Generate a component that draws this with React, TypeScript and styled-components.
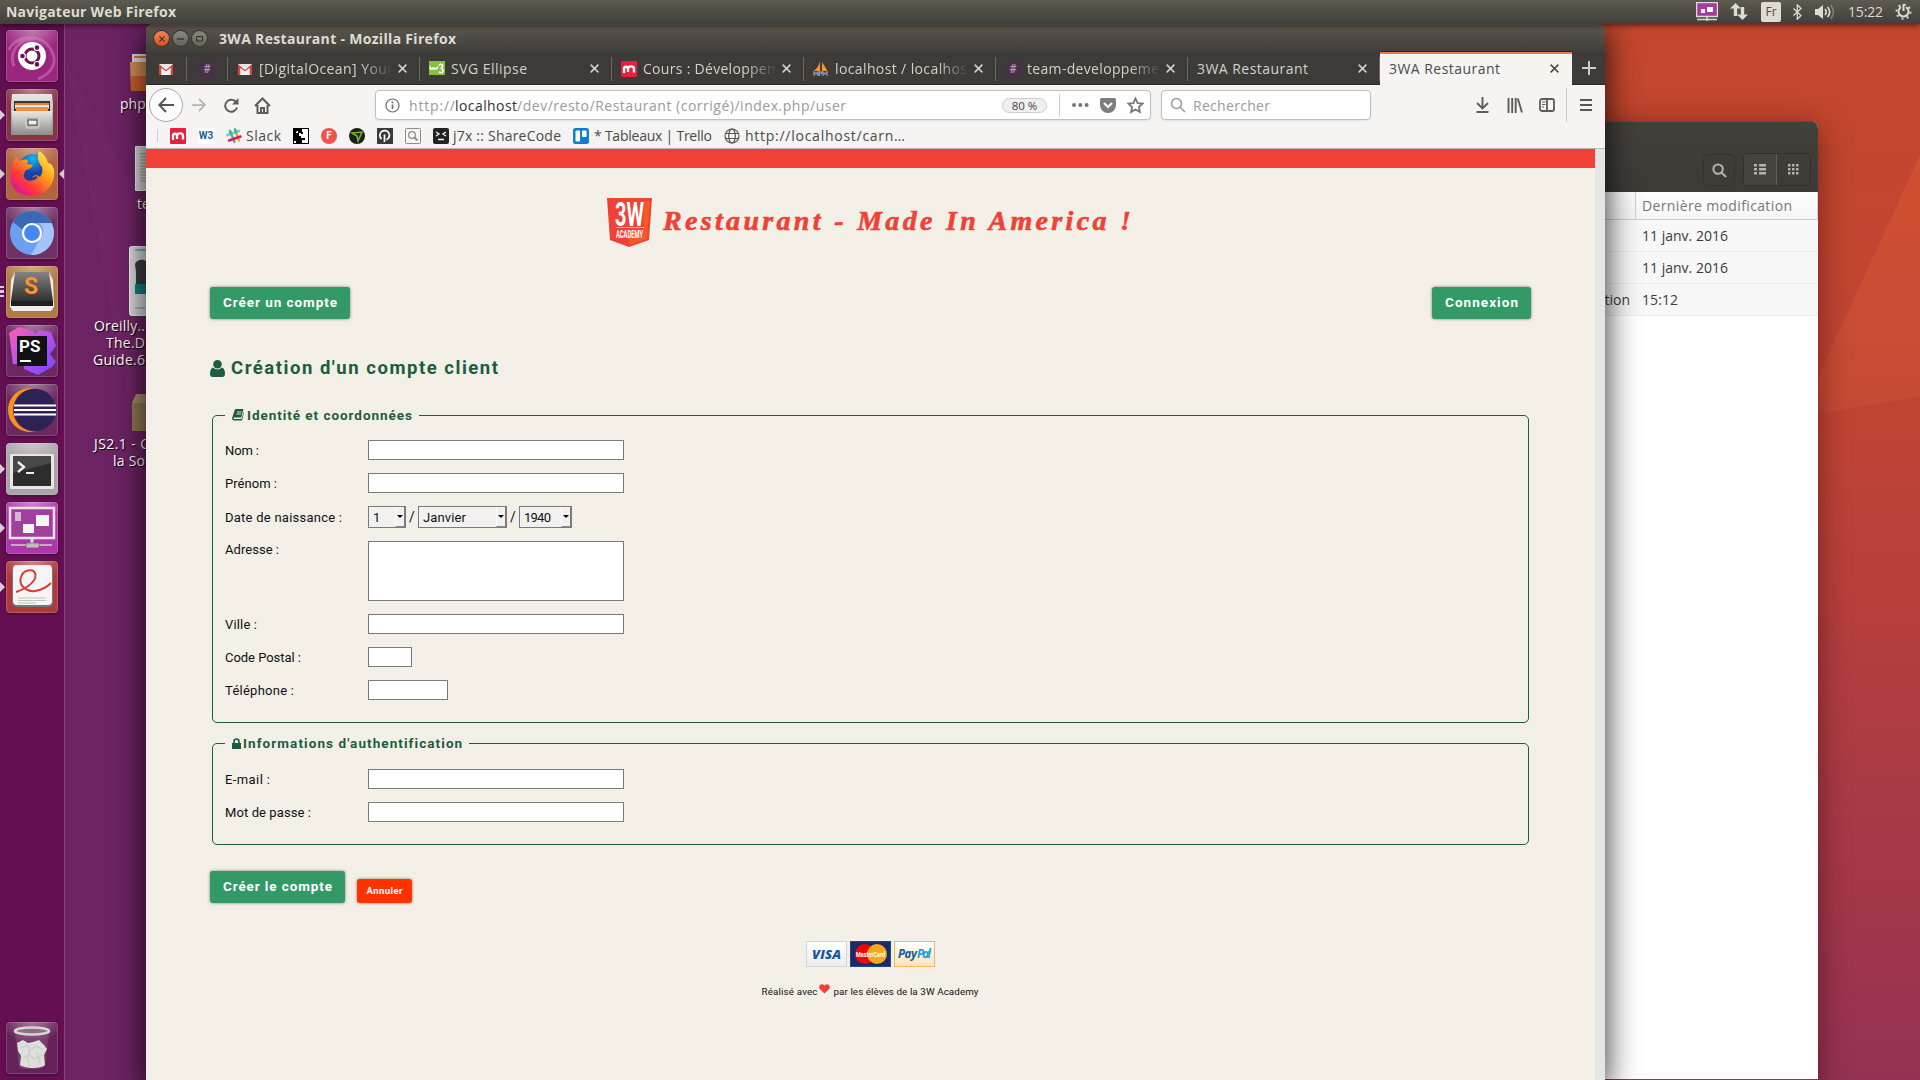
import React, { useLayoutEffect, useRef, useState } from 'react';
import styled, { createGlobalStyle, css } from 'styled-components';

const ui = '"Open Sans", "Noto Sans", sans-serif';
const site = 'Roboto, "Liberation Sans", sans-serif';

const Global = createGlobalStyle`
  * { box-sizing: border-box; }
  html, body { margin: 0; padding: 0; width: 1920px; height: 1080px; overflow: hidden; }
  body { font-family: ${ui}; font-size: 14px; }
  svg { display: block; flex: none; }
`;

/* ---------- text set to a fixed measure ---------- */
const Measure = styled.span`
  white-space: pre;
  display: inline-block;
  flex: none;
`;

function Fit({ w, children }: { w: number; children: string }) {
  const ref = useRef<HTMLSpanElement>(null);
  const [spacing, setSpacing] = useState(0);
  useLayoutEffect(() => {
    if (!ref.current) return;
    const natural = ref.current.getBoundingClientRect().width;
    const gaps = Math.max(1, Array.from(children).length - 1);
    setSpacing((w - natural) / gaps);
  }, []);
  return (
    <Measure ref={ref} style={{ letterSpacing: `${spacing}px`, marginRight: `${-spacing}px` }}>
      {children}
    </Measure>
  );
}

/* ---------- desktop ---------- */
const Screen = styled.div`
  position: relative;
  width: 1920px;
  height: 1080px;
  overflow: hidden;
  display: flex;
  flex-direction: column;
  background: linear-gradient(90deg, #6c2363 0%, #6c2363 10%, #a8383f 70%, #c4462e 90%);
`;
const Wallpaper = styled.svg`
  position: absolute;
  inset: 0;
`;
const Panel = styled.header`
  position: relative;
  z-index: 3;
  height: 24px;
  flex: none;
  display: flex;
  align-items: center;
  justify-content: space-between;
  padding: 0 8px 1px 6px;
  color: #dfdbd2;
  background: linear-gradient(#5d5a50, #403f3a);
  box-shadow: 0 1px 6px rgba(30, 0, 10, 0.7);
`;
const PanelTitle = styled.div`
  font-weight: 700;
  font-size: 14px;
`;
const Indicators = styled.div`
  display: flex;
  align-items: center;
`;
const Indicator = styled.div<{ $gap: number }>`
  margin-left: ${(p) => p.$gap}px;
  display: flex;
`;
const Lang = styled.div`
  width: 20px;
  height: 20px;
  border-radius: 2px;
  background: #dfdbd2;
  color: #4a4841;
  font-size: 12px;
  line-height: 20px;
  text-align: center;
`;
const Body = styled.div`
  position: relative;
  flex: 1;
  display: flex;
`;
const Launcher = styled.nav`
  width: 65px;
  height: 1056px;
  display: flex;
  flex-direction: column;
  gap: 7px;
  padding: 6px 0 6px 6px;
  background: linear-gradient(#5a0f4c, #650f53 8%, #650f53);
  border-right: 1px solid #86457f;
`;
const Tile = styled.div<{ $bg: string; $last?: boolean }>`
  position: relative;
  width: 52px;
  height: 52px;
  flex: none;
  border-radius: 4px;
  background: radial-gradient(ellipse 60% 40% at 50% 0, rgba(255, 255, 255, 0.4), transparent), ${(p) => p.$bg};
  box-shadow: inset 0 0 0 1px rgba(255, 255, 255, 0.17), 0 1px 3px rgba(0, 0, 0, 0.4);
  ${(p) => p.$last && css`margin-top: auto;`}
`;
const Pip = styled.i<{ $right?: boolean }>`
  position: absolute;
  top: 21px;
  border: 5px solid transparent;
  ${(p) => p.$right
    ? css`right: -6px; border-left: 0; border-right-color: #d8cdd6;`
    : css`left: -6px; border-right: 0; border-left-color: #d8cdd6;`}
`;
const Stack = styled.i`
  position: absolute;
  left: -6px;
  top: 20px;
  width: 4px;
  height: 11px;
  background: repeating-linear-gradient(#d8cdd6 0 2px, transparent 2px 4.5px);
`;
const Desk = styled.div`
  position: relative;
  flex: 1;
`;
const DeskItem = styled.div<{ $x: number; $y: number }>`
  position: absolute;
  left: ${(p) => p.$x}px;
  top: ${(p) => p.$y}px;
`;
const DeskLabel = styled.div<{ $x: number; $y: number }>`
  position: absolute;
  left: ${(p) => p.$x}px;
  top: ${(p) => p.$y}px;
  color: #fff;
  line-height: 17px;
  white-space: pre;
  text-shadow: 1px 1px 1px #000;
`;

/* ---------- file manager ---------- */
const Files = styled.section`
  position: absolute;
  left: 1300px;
  top: 121px;
  width: 518px;
  height: 958px;
  border-radius: 7px 7px 0 0;
  background: #fff;
  overflow: hidden;
  display: flex;
  flex-direction: column;
`;
const FilesShadow = styled.div`
  position: absolute;
  left: 1300px;
  top: 121px;
  width: 518px;
  height: 980px;
  border-radius: 7px;
  box-shadow: 0 6px 30px rgba(40, 0, 0, 0.5);
`;
const FilesBar = styled.div`
  height: 71px;
  flex: none;
  background: linear-gradient(#42413b, #3b3a35);
  box-shadow: inset 0 1px #55534a;
  display: flex;
  justify-content: flex-end;
  align-items: flex-end;
  padding: 0 7px 6px;
  gap: 8px;
`;
const FilesBtn = styled.div`
  width: 32px;
  height: 32px;
  border: 1px solid #34332e;
  border-radius: 5px;
  display: grid;
  place-items: center;
  color: #b5b2a8;
`;
const Segmented = styled.div`
  display: flex;
  height: 33px;
  border: 1px solid #31302b;
  border-radius: 5px;
`;
const Segment = styled.div<{ $on?: boolean }>`
  width: 33px;
  display: grid;
  place-items: center;
  color: #b5b2a8;
  background: ${(p) => (p.$on ? '#45443e' : 'transparent')};
  border-right: ${(p) => (p.$on ? '1px solid #605e56' : '0')};
`;
const FileRow = styled.div<{ $head?: boolean }>`
  display: grid;
  grid-template-columns: 336px 1fr;
  height: ${(p) => (p.$head ? 28 : 32)}px;
  line-height: ${(p) => (p.$head ? 27 : 32)}px;
  flex: none;
  color: ${(p) => (p.$head ? '#77777a' : '#3c3c3c')};
  background: ${(p) => (p.$head ? 'linear-gradient(#fefefe, #f5f5f4)' : '#f7f7f7')};
  border-bottom: 1px solid ${(p) => (p.$head ? '#cfcfcf' : '#ececec')};
`;
const FileCell = styled.div<{ $rule?: boolean; $end?: boolean }>`
  padding: 0 6px;
  overflow: hidden;
  text-align: ${(p) => (p.$end ? 'right' : 'left')};
  border-right: ${(p) => (p.$rule ? '1px solid #cfcfcf' : '0')};
`;

/* ---------- browser ---------- */
const Browser = styled.main`
  position: absolute;
  left: 146px;
  top: 24px;
  width: 1459px;
  height: 1056px;
  border-radius: 8px 8px 0 0;
  display: flex;
  flex-direction: column;
  background: #3c3b37;
  box-shadow: 0 8px 30px 3px rgba(0, 0, 0, 0.72);
`;
const TitleBar = styled.div`
  height: 28px;
  flex: none;
  display: flex;
  align-items: center;
  gap: 5px;
  padding: 1px 8px 0 8px;
  border-radius: 7px 7px 0 0;
  background: linear-gradient(#5b584e, #403f3a);
  box-shadow: inset 0 1px #6d6a5e;
`;
const WinButton = styled.div<{ $close?: boolean }>`
  width: 15px;
  height: 15px;
  border-radius: 50%;
  display: grid;
  place-items: center;
  background: ${(p) => (p.$close ? 'linear-gradient(#f58058, #dd4f22)' : 'linear-gradient(#8b887e, #65635b)')};
  box-shadow: 0 0 0 1px #36352f;
  color: #33322d;
  margin-right: -1px;
`;
const WinTitle = styled.div`
  margin-left: 8px;
  font-weight: 700;
  color: #dfdbd2;
`;
const TabStrip = styled.div`
  height: 33px;
  flex: none;
  display: flex;
  background: #3c3b37;
  border-bottom: 1px solid #282723;
`;
const Tab = styled.div<{ $pinned?: boolean; $active?: boolean; $last?: boolean; $w?: number }>`
  width: ${(p) => p.$w ?? 192}px;
  height: ${(p) => (p.$active ? 33 : 32)}px;
  flex: none;
  display: flex;
  align-items: center;
  gap: 6px;
  padding: ${(p) => (p.$active ? 0 : 1)}px 13px 0 ${(p) => (p.$pinned ? 12 : 9)}px;
  color: ${(p) => (p.$active ? '#4c4c4c' : '#d5d1c8')};
  ${(p) => p.$active
    ? css`background: #f5f4f2; box-shadow: inset 0 2px #f07746, 0 -1px #282723;`
    : css`background: linear-gradient(#6a6964, #6a6964) right 5px / 1px 24px no-repeat;`}
  ${(p) => p.$last && css`background: none;`}
`;
const TabText = styled.div<{ $fade?: boolean }>`
  flex: 1;
  min-width: 0;
  overflow: hidden;
  white-space: nowrap;
  ${(p) => p.$fade && css`
    margin-right: -2px;
    mask-image: linear-gradient(90deg, #000 76%, transparent 99%);
  `}
`;
const NewTab = styled.div`
  width: 33px;
  display: flex;
  align-items: center;
  justify-content: center;
`;
const NavBar = styled.div`
  height: 40px;
  flex: none;
  display: flex;
  align-items: center;
  background: #f5f4f2;
  color: #5c5c5c;
`;
const BackButton = styled.div`
  width: 34px;
  height: 34px;
  margin-left: 3px;
  border: 1px solid #aaa8a6;
  border-radius: 50%;
  background: #fcfcfc;
  display: grid;
  place-items: center;
`;
const NavIcon = styled.div<{ $ml: number; $dim?: boolean }>`
  margin-left: ${(p) => p.$ml}px;
  opacity: ${(p) => (p.$dim ? 0.4 : 1)};
`;
const Field = styled.div<{ $w: number; $ml: number }>`
  width: ${(p) => p.$w}px;
  height: 30px;
  margin-left: ${(p) => p.$ml}px;
  border: 1px solid #c2bfbc;
  border-radius: 4px;
  background: #fff;
  box-shadow: 0 1px 2px rgba(0, 0, 0, 0.08);
  display: flex;
  align-items: center;
  color: #9a9a9a;
`;
const Host = styled.span`
  color: #333;
`;
const UrlText = styled.div`
  margin-left: 9px;
  flex: 1;
  display: flex;
`;
const Zoom = styled.div`
  width: 45px;
  height: 15px;
  border: 1px solid #cfcdcb;
  border-radius: 8px;
  background: #f1f0ef;
  color: #444;
  font-size: 11.5px;
  line-height: 13px;
  text-align: center;
`;
const Rule = styled.div<{ $h: number; $ml: number }>`
  width: 1px;
  height: ${(p) => p.$h}px;
  margin-left: ${(p) => p.$ml}px;
  background: #cfcdcb;
`;
const Bookmarks = styled.div`
  height: 24px;
  flex: none;
  display: flex;
  align-items: center;
  padding: 0 0 2px 11px;
  background: #f5f4f2;
  border-bottom: 1px solid #b9b7b4;
  color: #4a4a4a;
`;
const Bookmark = styled.div<{ $ml: number; $gap?: number }>`
  margin-left: ${(p) => p.$ml}px;
  height: 16px;
  display: flex;
  align-items: center;
  gap: ${(p) => p.$gap ?? 4}px;
`;
const Badge = styled.div<{ $bg: string; $fg: string; $round?: boolean; $size?: number }>`
  width: 16px;
  height: 16px;
  flex: none;
  border-radius: ${(p) => (p.$round ? '50%' : '1px')};
  background: ${(p) => p.$bg};
  color: ${(p) => p.$fg};
  font: 700 ${(p) => p.$size ?? 11}px / 16px ${site};
  text-align: center;
`;

/* ---------- web page ---------- */
const Viewport = styled.div`
  flex: 1;
  display: flex;
  background: #e5e5e5;
  padding-right: 10px;
`;
const Page = styled.div`
  flex: 1;
  border-top: 19px solid #ef4136;
  padding: 30px 64px 0;
  font-family: ${site};
  color: #111;
  background:
    radial-gradient(circle, rgba(90, 80, 60, 0.04) 0.6px, transparent 1.2px) 0 0 / 4px 4px,
    radial-gradient(circle, rgba(90, 80, 60, 0.03) 0.6px, transparent 1.2px) 2px 2px / 4px 4px,
    #f5f2ea;
`;
const Brand = styled.div`
  height: 49px;
  display: flex;
  justify-content: center;
  gap: 11px;
  padding-right: 3px;
`;
const BrandTitle = styled.h1`
  margin: 0;
  font: italic 700 28px / 46px "Liberation Serif", serif;
  -webkit-text-stroke: 0.6px #ef4136;
  color: #ef4136;
`;
const Actions = styled.div`
  margin-top: 40px;
  display: flex;
  justify-content: space-between;
`;
const Button = styled.button<{ $w: number; $danger?: boolean }>`
  width: ${(p) => p.$w}px;
  height: ${(p) => (p.$danger ? 24 : 32)}px;
  padding: 0;
  border: 0;
  border-radius: 3px;
  background: ${(p) => (p.$danger ? '#ff3300' : '#339966')};
  box-shadow: 0 0 3px rgba(0, 0, 0, 0.5);
  color: #fff;
  font: 700 ${(p) => (p.$danger ? 9.5 : 13.5)}px / 1 ${site};
`;
const Heading = styled.h2`
  margin: 37px 0 0;
  height: 24px;
  display: flex;
  align-items: center;
  gap: 6px;
  color: #1d5c3e;
  font-size: 18.5px;
  font-weight: 700;
`;
const Group = styled.fieldset<{ $mt: number; $pt: number }>`
  margin: ${(p) => p.$mt}px 2px 0;
  padding: ${(p) => p.$pt}px 12px 9px;
  border: 1px solid #1d5c3e;
  border-radius: 5px;
`;
const Legend = styled.legend<{ $gap: number }>`
  height: 20px;
  padding: 0 7px;
  display: flex;
  align-items: center;
  gap: ${(p) => p.$gap}px;
  color: #1d5c3e;
  font-size: 13.5px;
  font-weight: 700;
`;
const Row = styled.div<{ $top?: boolean }>`
  display: flex;
  align-items: ${(p) => (p.$top ? 'flex-start' : 'center')};
  margin-bottom: 13px;
`;
const Label = styled.label`
  width: 143px;
  padding-top: 1px;
  font-size: 13px;
  line-height: 15px;
`;
const Input = styled.input<{ $w: number }>`
  width: ${(p) => p.$w}px;
  height: 20px;
  border: 1px solid #7b7b7b;
  background: #fff;
  outline: 0;
`;
const Area = styled.textarea`
  width: 256px;
  height: 60px;
  border: 1px solid #7b7b7b;
  background: #fff;
  resize: none;
  display: block;
`;
const Select = styled.div<{ $w: number }>`
  width: ${(p) => p.$w}px;
  height: 22px;
  border: 1px solid #7b7b7b;
  border-right-width: 2px;
  background: #f2f1f0;
  display: flex;
  align-items: center;
  justify-content: space-between;
  padding-left: 4px;
  font-size: 13px;
`;
const Arrow = styled.i`
  width: 9px;
  height: 20px;
  border-left: 1px solid #fff;
  border-bottom: 1px solid #8a8a8a;
  display: grid;
  place-items: center;
  &::after {
    content: '';
    border: 3px solid transparent;
    border-top-color: #000;
    border-bottom: 0;
  }
`;
const Slash = styled.span`
  width: 12px;
  text-align: center;
  font-size: 14px;
`;
const Submit = styled.div`
  margin-top: 26px;
  display: flex;
  align-items: flex-end;
  gap: 12px;
`;
const Cards = styled.div`
  margin-top: 38px;
  display: flex;
  justify-content: center;
  gap: 3px;
`;
const Card = styled.div<{ $bg: string; $edge: string }>`
  width: 41px;
  height: 26px;
  border: 1px solid ${(p) => p.$edge};
  background: ${(p) => p.$bg};
  display: flex;
  align-items: center;
  justify-content: center;
  font: italic 700 11.5px / 1 "Open Sans", sans-serif;
  color: #14589f;
`;
const Visa = styled.span`
  font-size: 13px;
  font-weight: 800;
`;
const Blue = styled.span`
  color: #1a9bd8;
`;
const Made = styled.p`
  margin: 16px 0 0;
  padding-right: 1px;
  height: 16px;
  display: flex;
  align-items: center;
  justify-content: center;
  font-size: 9.8px;
`;
const HeartGap = styled.span`
  margin: -4px 3px 0 2px;
`;

/* ---------- small drawings ---------- */
const Gmail = () => (
  <svg width="16" height="16" viewBox="0 0 16 16">
    <path d="M1 3h14v11H1z" fill="#f1f1f1" />
    <path d="M1 14V3l7 6 7-6v11h-2.500V7L8 10.800 3.500 7v7z" fill="#d6453a" />
    <path d="M3.500 7L8 10.800 12.500 7v7h-9z" fill="#f1f1f1" />
    <path d="M2.500 3h11L8 7.500z" fill="#e3e3e3" />
  </svg>
);
const Moodle = () => (
  <svg width="16" height="16" viewBox="0 0 16 16">
    <rect width="16" height="16" rx="1" fill="#e6213f" />
    <path d="M3 12V6.500M3 8c0-3 4-3 4 0v3M7 8c0-3.500 6-3.500 6 0v3.500" fill="none" stroke="#fff" strokeWidth="2.300" />
  </svg>
);
const W3Schools = () => (
  <svg width="16" height="16" viewBox="0 0 16 16">
    <path d="M0 0h16v14H0z" fill="#85c13d" />
    <path d="M1 5.500q0 3 2 2.500 1.500-.5 1.500-2 0 2.300 2 2t2-2.500" fill="none" stroke="#fff" strokeWidth="1.700" />
    <path d="M10 4.500q1-1.500 2.700-1T13 6.500q-.5 1-1.500 1 2.500 0 2.500 2t-2 2.200q-1.500 0-2-1" fill="none" stroke="#fff" strokeWidth="1.600" />
  </svg>
);
const Sail = () => (
  <svg width="16" height="16" viewBox="0 0 16 16">
    <path d="M7 0v10H1C3 8 6 5 7 0zM9 1c2 3 4 6 5.500 9H9z" fill="#f7931e" />
    <path d="M1 15v-4l2 2 2-2v4M6.500 15v-4h2v2.500M10 15v-4l2 2 2-2v4" fill="none" stroke="#8f93bd" strokeWidth="1.300" />
  </svg>
);
const Slack = () => (
  <svg width="16" height="16" viewBox="0 0 16 16" fill="none" strokeWidth="2.400" strokeLinecap="round">
    <path d="M4 3l4.500 11" stroke="#3eb991" />
    <path d="M9 1.500l4 11" stroke="#e9a820" />
    <path d="M1.500 7L13 3" stroke="#6fcadc" />
    <path d="M3 12.500l11.500-4" stroke="#e01765" />
    <path d="M4 3l1 3M9 1.500l1 3" stroke="#3eb991" />
  </svg>
);
const Cross = ({ s = 9 }: { s?: number }) => (
  <svg width={s} height={s} viewBox="0 0 10 10"><path d="M.7.7l8.600 8.600M9.300.7L.7 9.300" stroke="currentColor" strokeWidth="1.700" /></svg>
);
const Glass = ({ s = 16, w = 2 }: { s?: number; w?: number }) => (
  <svg width={s} height={s} viewBox="0 0 16 16" fill="none" stroke="currentColor" strokeWidth={w}>
    <circle cx="6.500" cy="6.500" r="5" /><path d="M10 10l5 5" />
  </svg>
);
const Screenlet = () => (
  <svg width="22" height="19" viewBox="0 0 22 19">
    <rect x=".5" y=".5" width="21" height="14" fill="#a53aa0" stroke="#dfdbd2" strokeWidth="1.500" />
    <path d="M5 7h4v4H5zM11 5h6v5h-6z" fill="#fff" />
    <path d="M1 17.500h20M11 15v4" stroke="#dfdbd2" strokeWidth="1.500" />
  </svg>
);

const UbuntuIcon = () => (
  <svg width="52" height="52" viewBox="0 0 52 52">
    <path d="M3 20C8 6 34 2 44 18s0 26-12 31M8 36C2 22 14 8 28 9" fill="none" stroke="#e9a6da" strokeOpacity=".35" strokeWidth="3" />
    <circle cx="26" cy="26" r="14" fill="#fff" />
    <circle cx="26" cy="26" r="7" fill="none" stroke="#71104f" strokeWidth="3" />
    <g fill="#71104f" stroke="#fff" strokeWidth="1.200"><circle cx="16.500" cy="26" r="2.900" /><circle cx="31" cy="17.600" r="2.900" /><circle cx="31" cy="34.400" r="2.900" /></g>
  </svg>
);
const CabinetIcon = () => (
  <svg width="52" height="52" viewBox="0 0 52 52">
    <defs><linearGradient id="cab" x2="0" y2="1"><stop stopColor="#e8e8e6" /><stop offset="1" stopColor="#8c8c8a" /></linearGradient></defs>
    <path d="M6 5h40l1 11v30H5V16z" fill="url(#cab)" />
    <path d="M8 12h36v12H8z" fill="#3f3330" />
    <path d="M9 14h34v6H9z" fill="#e97f35" /><path d="M9 16h34v3H9z" fill="#f3e6d2" /><path d="M10 18h32v4H10z" fill="#e9914a" />
    <path d="M6 22h40l-1 24H7z" fill="url(#cab)" />
    <rect x="20" y="28" width="13" height="11" rx="1.500" fill="#b5b5b3" stroke="#d9d9d7" /><rect x="22" y="31" width="9" height="5" fill="#eee" stroke="#444" />
  </svg>
);
const FoxIcon = () => (
  <svg width="52" height="52" viewBox="0 0 52 52">
    <defs>
      <linearGradient id="fox" x1=".9" y1=".1" x2=".2" y2=".9"><stop stopColor="#fff04a" /><stop offset=".4" stopColor="#ff9a1c" /><stop offset=".75" stopColor="#ff3a3a" /><stop offset="1" stopColor="#e3178b" /></linearGradient>
      <radialGradient id="globe" cx=".5" cy=".15"><stop stopColor="#18b6f5" /><stop offset="1" stopColor="#1c3fa4" /></radialGradient>
    </defs>
    <circle cx="27" cy="21" r="15" fill="url(#globe)" />
    <path d="M33 3c6 4 8 8 9 12 3 0 5 3 6 7 2 13-8 26-22 26C12 48 4 39 4 28c0-6 2-12 6-20 1 3 2 4 3 5 3-1 6-2 9-1l-1 4c2 0 4 1 6 1-1 3-5 4-8 6 0 2-2 3-1 6 3 6 11 4 14 0-2-1-3-1-6 1 1-3 5-4 8-1 2-3 3-6 2-10-3-4-6-9-3-16z" fill="url(#fox)" />
  </svg>
);
const ChromiumIcon = () => (
  <svg width="52" height="52" viewBox="0 0 52 52">
    <circle cx="26" cy="26" r="22" fill="#6b9ff0" />
    <path d="M26 4a22 22 0 0 1 19.500 12H26a10 10 0 0 0-9 7L7 15A22 22 0 0 1 26 4z" fill="#3a68b4" />
    <path d="M45.500 16A22 22 0 0 1 25 48l9.500-17a10 10 0 0 0-2-15z" fill="#a3c3fa" />
    <circle cx="26" cy="26" r="9" fill="#4587f4" stroke="#fff" strokeWidth="2.200" />
  </svg>
);
const Glyph = styled.text<{ $size: number; $fill: string }>`
  font: 700 ${(p) => p.$size}px ${site};
  fill: ${(p) => p.$fill};
`;
const SublimeIcon = () => (
  <svg width="52" height="52" viewBox="0 0 52 52">
    <path d="M5 14l4-8h34l4 8 1 27-3 4H7l-3-4z" fill="#eee" />
    <defs><linearGradient id="sub" x2="0" y2="1"><stop stopColor="#838383" /><stop offset="1" stopColor="#303030" /></linearGradient></defs>
    <path d="M9 6h34l4 29H5z" fill="url(#sub)" /><path d="M5 35h42v5H5z" fill="#1f1f1f" />
    <Glyph x="18" y="28" $size={23} $fill="#ff9326">S</Glyph>
  </svg>
);
const StormIcon = () => (
  <svg width="52" height="52" viewBox="0 0 52 52">
    <defs><linearGradient id="ps" x2="1" y2="1"><stop stopColor="#ff5fb0" /><stop offset=".5" stopColor="#b550f0" /><stop offset="1" stopColor="#7547ff" /></linearGradient></defs>
    <path d="M3 8l10-6 14 4 2 3 4-4 12 2 5 14-6 8 6 8-4 5-14 8-14-6v-4l-11-1z" fill="url(#ps)" />
    <rect x="11" y="11" width="30" height="30" fill="#111" />
    <Glyph x="13" y="26.500" $size={17} $fill="#fff">PS</Glyph>
    <path d="M14 36h11" stroke="#fff" strokeWidth="2" />
  </svg>
);
const EclipseIcon = () => (
  <svg width="52" height="52" viewBox="0 0 52 52">
    <circle cx="24" cy="26" r="22" fill="#f7941e" /><circle cx="28.500" cy="26" r="21.500" fill="#6a2a5e" /><circle cx="29" cy="26" r="21" fill="#2c2255" />
    <path d="M8 21.500h42M8 26h42M8 30.500h42" stroke="#fff" strokeWidth="2.200" />
  </svg>
);
const TermIcon = () => (
  <svg width="52" height="52" viewBox="0 0 52 52">
    <rect x="4" y="11" width="44" height="35" rx="1.500" fill="#e6e6e3" /><rect x="7" y="13" width="38" height="30" fill="#2c2d2c" />
    <path d="M7 13h38v7L7 30z" fill="#fff" opacity=".13" />
    <path d="M12 19l6 5-6 5" fill="none" stroke="#eee" strokeWidth="2.300" /><path d="M20 30h8" stroke="#eee" strokeWidth="2" />
  </svg>
);
const RemoteIcon = () => (
  <svg width="52" height="52" viewBox="0 0 52 52">
    <rect x="4" y="6" width="44" height="30" fill="#a23f9c" stroke="#e4e4e0" strokeWidth="2.500" />
    <path d="M9 10h6v9H9z" fill="#d9b3d6" /><path d="M30 13h13v11H30zM17 22h11v9H17z" fill="#f5f5f5" />
    <path d="M26 37v5" stroke="#ddd" strokeWidth="3" /><path d="M5 43h41" stroke="#cfcfcb" strokeWidth="1.500" /><rect x="20" y="41" width="13" height="5" fill="#bdbdb8" stroke="#555" strokeWidth=".6" />
  </svg>
);
const PdfIcon = () => (
  <svg width="52" height="52" viewBox="0 0 52 52">
    <rect x="6" y="5" width="41" height="41" rx="5" fill="#777" /><rect x="7" y="4" width="39" height="40" rx="4" fill="#f5f5f5" />
    <path d="M10 31c12-4 22-12 19-19-2-5-12-3-14 4-3 9 6 15 14 14 7-1 12-4 16-8" fill="none" stroke="#dd3a35" strokeWidth="2" />
    <path d="M12 37h28M12 39.500h28M12 42h18" stroke="#c4c4c4" strokeWidth="1" />
  </svg>
);
const TrashIcon = () => (
  <svg width="52" height="52" viewBox="0 0 52 52">
    <path d="M9 10l4 35c1 3 25 3 26 0l4-35z" fill="#9a6a96" opacity=".35" />
    <path d="M11 21l6-3 5 3 5-1 6-2 5 5 3 4-3 6 1 10c-4 4-20 4-25 0l1-9-3-5z" fill="#dededb" />
    <path d="M15 26l6-3 3 5 7-4 6 4M17 36l6-4 5 5 8-4M24 28l-3 8 3 8M31 30l3 12" fill="none" stroke="#cbcbc7" strokeWidth="1.200" />
    <ellipse cx="26" cy="9" rx="17" ry="3.500" fill="#8d6f8a" stroke="#d6d6d2" strokeWidth="2.600" />
  </svg>
);

const launcher: Array<{ bg: string; icon: React.ReactNode; run?: string }> = [
  { bg: '#9b2680', icon: <UbuntuIcon /> },
  { bg: '#883347', icon: <CabinetIcon />, run: 'l' },
  { bg: '#b1643e', icon: <FoxIcon />, run: 'lr' },
  { bg: '#6f3166', icon: <ChromiumIcon /> },
  { bg: '#b07a42', icon: <SublimeIcon />, run: 's' },
  { bg: '#6c2860', icon: <StormIcon /> },
  { bg: '#6c2860', icon: <EclipseIcon /> },
  { bg: '#aba3aa', icon: <TermIcon />, run: 'l' },
  { bg: '#ae37ae', icon: <RemoteIcon />, run: 'l' },
  { bg: '#b0393f', icon: <PdfIcon />, run: 'l' },
];

const TextRow = ({ label, lw, w = 256 }: { label: string; lw: number; w?: number }) => (
  <Row><Label><Fit w={lw}>{label}</Fit></Label><Input $w={w} /></Row>
);

export default function App() {
  return (
    <Screen>
      <Global />
      <Wallpaper width="1920" height="1080">
        <defs>
          <linearGradient id="right" x2="0" y2="1">
            <stop stopColor="#c4472c" /><stop offset=".4" stopColor="#c04434" /><stop offset=".6" stopColor="#b33e3e" /><stop offset="1" stopColor="#953253" />
          </linearGradient>
          <linearGradient id="facet" x2="0" y2="1"><stop stopColor="#d05030" /><stop offset="1" stopColor="#c54a36" /></linearGradient>
        </defs>
        <path d="M1600 0h320v1080h-320z" fill="url(#right)" />
        <path d="M1920 155l-110 240v20l110-18z" fill="url(#facet)" />
        <path d="M65 60l70 130v250z" fill="#7a2b70" opacity=".25" />
      </Wallpaper>

      <Panel>
        <PanelTitle><Fit w={170}>Navigateur Web Firefox</Fit></PanelTitle>
        <Indicators>
          <Indicator $gap={0}><Screenlet /></Indicator>
          <Indicator $gap={12}>
            <svg width="18" height="17" viewBox="0 0 18 17" fill="#dfdbd2"><path d="M5.500 0L0 5.500h3.800V13h3.400V5.500H11zM12.500 17L18 11.500h-3.800V4h-3.400v7.500H7z" /></svg>
          </Indicator>
          <Indicator $gap={13}><Lang>Fr</Lang></Indicator>
          <Indicator $gap={12}>
            <svg width="9" height="16" viewBox="0 0 9 16" fill="none" stroke="#dfdbd2" strokeWidth="1.300"><path d="M.5 4.500l7.500 7-3.700 3.700V.8L8 4.500l-7.500 7" /></svg>
          </Indicator>
          <Indicator $gap={13}>
            <svg width="20" height="16" viewBox="0 0 20 16" fill="none" stroke="#dfdbd2" strokeWidth="1.700"><path d="M0 5h3l5-4v14l-5-4H0z" fill="#dfdbd2" stroke="none" /><path d="M10 5q2.500 3 0 6M12.500 3q4.500 5 0 10" /><path d="M15.500 1q6 7 0 14" opacity=".35" /></svg>
          </Indicator>
          <Indicator $gap={13}><Fit w={35}>15:22</Fit></Indicator>
          <Indicator $gap={12}>
            <svg width="17" height="17" viewBox="0 0 17 17" fill="none" stroke="#dfdbd2"><path d="M6 4.200a5 5 0 1 0 5 0M8.500 1v7" strokeWidth="2" /><circle cx="8.500" cy="8.700" r="7" strokeWidth="2" strokeDasharray="2 3.500" /></svg>
          </Indicator>
        </Indicators>
      </Panel>

      <Body>
        <Launcher>
          {launcher.map((t, i) => (
            <Tile key={i} $bg={t.bg}>
              {t.icon}
              {t.run?.includes('l') && <Pip />}
              {t.run?.includes('r') && <Pip $right />}
              {t.run === 's' && <Stack />}
            </Tile>
          ))}
          <Tile $bg="#662258" $last><TrashIcon /></Tile>
        </Launcher>
        <Desk>
          <DeskItem $x={65} $y={30}><svg width="40" height="38"><path d="M2 0h38v10H2z" fill="#e8e5e0" /><path d="M4 3h36" stroke="#df7a3a" strokeWidth="2" /><path d="M0 8h40v29H1z" fill="#d9925a" /><path d="M1 22h39v15H1z" fill="#d0622e" /></svg></DeskItem>
          <DeskLabel $x={55} $y={71}>phpMyA</DeskLabel>
          <DeskItem $x={70} $y={122}><svg width="30" height="46"><path d="M.5.500h30v44H.5z" fill="#dcdcda" stroke="#f5f5f5" /><path d="M5 8h20M5 11h20M5 14h20M5 17h20M5 20h20M5 23h20M5 26h20M5 29h20M5 32h20M5 35h20" stroke="#999" /></svg></DeskItem>
          <DeskLabel $x={72} $y={171}>test</DeskLabel>
          <DeskItem $x={64} $y={222}><svg width="40" height="71"><rect x=".5" y=".5" width="44" height="69" rx="2" fill="#dedede" stroke="#f2f2f2" /><path d="M6 4h30" stroke="#1d8c88" /><path d="M6 18c2-5 8-5 11-3 4-1 9 2 9 8v10h-4v5H7V26z" fill="#3e3e40" /><path d="M6 38h34v10H6z" fill="#138580" /><path d="M6 62h10" stroke="#888" /></svg></DeskItem>
          <DeskLabel $x={29} $y={293}><Fit w={51}>Oreilly..</Fit></DeskLabel>
          <DeskLabel $x={41} $y={310}><Fit w={39}>The.D</Fit></DeskLabel>
          <DeskLabel $x={28} $y={327}><Fit w={52}>Guide.6</Fit></DeskLabel>
          <DeskItem $x={67} $y={370}><svg width="30" height="38"><path d="M4 0h26v9H0z" fill="#a88f6b" /><path d="M0 9h30v28H0z" fill="#947b56" /></svg></DeskItem>
          <DeskLabel $x={29} $y={411}><Fit w={55}>JS2.1 - C</Fit></DeskLabel>
          <DeskLabel $x={48} $y={428}><Fit w={32}>la So</Fit></DeskLabel>
        </Desk>
      </Body>

      <FilesShadow />
      <Files>
        <FilesBar>
          <FilesBtn><Glass s={15} w={2.2} /></FilesBtn>
          <Segmented>
            <Segment $on><svg width="12" height="11" fill="currentColor"><path d="M0 0h3v2.500H0zM5 0h7v2.500H5zM0 4h3v2.500H0zM5 4h7v2.500H5zM0 8h3v2.500H0zM5 8h7v2.500H5z" /></svg></Segment>
            <Segment><svg width="11" height="11" fill="currentColor"><path d="M0 0h2.500v2.500H0zM4 0h2.500v2.500H4zM8 0h2.500v2.500H8zM0 4h2.500v2.500H0zM4 4h2.500v2.500H4zM8 4h2.500v2.500H8zM0 8h2.500v2.500H0zM4 8h2.500v2.500H4zM8 8h2.500v2.500H8z" /></svg></Segment>
          </Segmented>
        </FilesBar>
        <FileRow $head><FileCell $rule /><FileCell $rule><Fit w={150}>Dernière modification</Fit></FileCell></FileRow>
        <FileRow><FileCell /><FileCell><Fit w={86}>11 janv. 2016</Fit></FileCell></FileRow>
        <FileRow><FileCell /><FileCell><Fit w={86}>11 janv. 2016</Fit></FileCell></FileRow>
        <FileRow><FileCell $end>Présentation</FileCell><FileCell><Fit w={36}>15:12</Fit></FileCell></FileRow>
      </Files>

      <Browser>
        <TitleBar>
          <WinButton $close><Cross s={6} /></WinButton>
          <WinButton><svg width="7" height="2"><path d="M0 1h7" stroke="currentColor" strokeWidth="1.300" /></svg></WinButton>
          <WinButton><svg width="7" height="6"><path d="M.5.500h6v4.500h-6z" fill="none" stroke="currentColor" /></svg></WinButton>
          <WinTitle><Fit w={237}>3WA Restaurant - Mozilla Firefox</Fit></WinTitle>
        </TitleBar>
        <TabStrip>
          <Tab $pinned $w={41}><Gmail /></Tab>
          <Tab $pinned $w={41}><Badge $bg="#4a2f49" $fg="#a996a8" $size={12}>#</Badge></Tab>
          <Tab><Gmail /><TabText $fade><Fit w={134}>[DigitalOcean] Your</Fit></TabText><Cross /></Tab>
          <Tab><W3Schools /><TabText><Fit w={76}>SVG Ellipse</Fit></TabText><Cross /></Tab>
          <Tab><Moodle /><TabText $fade><Fit w={137}>Cours : Développem</Fit></TabText><Cross /></Tab>
          <Tab><Sail /><TabText $fade><Fit w={132}>localhost / localhos</Fit></TabText><Cross /></Tab>
          <Tab><Badge $bg="#4a2f49" $fg="#a996a8" $size={12}>#</Badge><TabText $fade><Fit w={132}>team-developpeme</Fit></TabText><Cross /></Tab>
          <Tab><TabText><Fit w={111}>3WA Restaurant</Fit></TabText><Cross /></Tab>
          <Tab $active><TabText><Fit w={111}>3WA Restaurant</Fit></TabText><Cross /></Tab>
          <NewTab><svg width="14" height="14"><path d="M7 0v14M0 7h14" stroke="#cfccc4" strokeWidth="2" /></svg></NewTab>
        </TabStrip>
        <NavBar>
          <BackButton><svg width="16" height="16" viewBox="0 0 16 16" fill="none" stroke="#555" strokeWidth="2"><path d="M16 8H1.500M8 1L1.300 8 8 15" /></svg></BackButton>
          <NavIcon $ml={8} $dim><svg width="16" height="14" viewBox="0 0 16 16" fill="none" stroke="#555" strokeWidth="2"><path d="M0 8h14.500M8 1l6.700 7L8 15" /></svg></NavIcon>
          <NavIcon $ml={17}><svg width="15" height="15" viewBox="0 0 15 15" fill="none" stroke="#5c5c5c" strokeWidth="2"><path d="M13 9.500A6 6 0 1 1 11.500 3.500" /><path d="M14.500 0v6.500H8z" fill="#5c5c5c" stroke="none" /></svg></NavIcon>
          <NavIcon $ml={15}><svg width="17" height="17" viewBox="0 0 17 17" fill="none" stroke="#5c5c5c" strokeWidth="2"><path d="M1 9l7.500-7.500L16 9M3.500 8v8h10V8" /><path d="M7 16v-5h3v5" /></svg></NavIcon>
          <Field $w={776} $ml={104}>
            <NavIcon $ml={9}><svg width="15" height="15" fill="none" stroke="#6a6a6a"><circle cx="7.500" cy="7.500" r="6.500" strokeWidth="1.200" /><path d="M7.500 6.500v4.500M7.500 3.500v1.800" strokeWidth="1.700" /></svg></NavIcon>
            <UrlText><Fit w={46}>http://</Fit><Host><Fit w={62}>localhost</Fit></Host><Fit w={329}>/dev/resto/Restaurant (corrigé)/index.php/user</Fit></UrlText>
            <Zoom>80 %</Zoom>
            <Rule $h={23} $ml={12} />
            <NavIcon $ml={12}><svg width="17" height="4" fill="#777"><circle cx="2" cy="2" r="2" /><circle cx="8.300" cy="2" r="2" /><circle cx="14.600" cy="2" r="2" /></svg></NavIcon>
            <NavIcon $ml={11}><svg width="16" height="15"><path d="M0 1.500Q0 0 1.500 0h13Q16 0 16 1.500V7a8 8 0 0 1-16 0z" fill="#7d7d7d" /><path d="M4 5l4 4 4-4" fill="none" stroke="#fff" strokeWidth="2.200" /></svg></NavIcon>
            <NavIcon $ml={11}><svg width="17" height="17" viewBox="0 0 17 17"><path d="M8.500 1.500l2.100 4.600 5 .5-3.700 3.400 1 5-4.400-2.500L4.100 15l1-5L1.400 6.600l5-.5z" fill="none" stroke="#777" strokeWidth="1.800" /></svg></NavIcon>
            <NavIcon $ml={6} />
          </Field>
          <Field $w={210} $ml={10}>
            <NavIcon $ml={8}><Glass s={16} w={1.5} /></NavIcon>
            <NavIcon $ml={7}><Fit w={77}>Rechercher</Fit></NavIcon>
          </Field>
          <NavIcon $ml={105}><svg width="13" height="16" fill="none" stroke="#5c5c5c" strokeWidth="1.900"><path d="M6.500 0v11M1 6l5.500 5.500L12 6M.5 15h12" /></svg></NavIcon>
          <NavIcon $ml={18}><svg width="16" height="15" fill="none" stroke="#5c5c5c" strokeWidth="1.900"><path d="M1.500 0v15M5.200 0v15M8.700 0v15M10.800.5l4.200 14" /></svg></NavIcon>
          <NavIcon $ml={16}><svg width="16" height="14" fill="none" stroke="#5c5c5c" strokeWidth="1.800"><rect x="1" y="1" width="14" height="12" rx="2" /><path d="M8 1v12" /><path d="M3 4h3.500M3 6.500h3.500M3 9h2" strokeWidth="1" /></svg></NavIcon>
          <Rule $h={34} $ml={11} />
          <NavIcon $ml={13}><svg width="12" height="12" stroke="#555" strokeWidth="2"><path d="M0 1h12M0 6h12M0 11h12" /></svg></NavIcon>
        </NavBar>
        <Bookmarks>
          <Rule $h={13} $ml={0} />
          <Bookmark $ml={12}><Moodle /></Bookmark>
          <Bookmark $ml={12}><Badge $bg="#fff" $fg="#1b5e9c" $size={10}>W3</Badge></Bookmark>
          <Bookmark $ml={12}><Slack /><Fit w={35}>Slack</Fit></Bookmark>
          <Bookmark $ml={12}><svg width="16" height="16"><path d="M0 0h16v16H0z" /><path d="M9 1h6v14H9v-3h3v-2H8V8H6V5h2v1h2V4H9zM4 3h1v2H3V4zM1 13h2v2H1z" fill="#fff" /></svg></Bookmark>
          <Bookmark $ml={12}><Badge $round $bg="#f4504c" $fg="#fff" $size={10}>F</Badge></Bookmark>
          <Bookmark $ml={12}><svg width="16" height="16"><circle cx="8" cy="8" r="8" fill="#1e1e1e" /><path d="M3 5l10-1-4 9-1-5z" fill="none" stroke="#76b82a" strokeWidth="1.500" /></svg></Bookmark>
          <Bookmark $ml={12}><svg width="16" height="16"><path d="M0 0h16v16H0z" fill="#3a3a3a" /><path d="M4.500 11a4.800 4.800 0 1 1 5 .8M7.500 14V6.500" fill="none" stroke="#fff" strokeWidth="1.700" /></svg></Bookmark>
          <Bookmark $ml={12}><svg width="16" height="16" fill="none" stroke="#8d8d8d"><rect x=".5" y=".5" width="15" height="15" rx="1" /><circle cx="7" cy="7" r="3.300" strokeWidth="1.300" /><path d="M9.500 9.500l3 3" strokeWidth="1.800" /></svg></Bookmark>
          <Bookmark $ml={12}><svg width="16" height="16" fill="none" stroke="#fff" strokeWidth="1.300"><rect width="16" height="16" rx="2" fill="#222" stroke="none" /><path d="M3 4l3 2-3 2M13 4l-3 2 3 2M5 11.500h6" /></svg><Fit w={108}>j7x :: ShareCode</Fit></Bookmark>
          <Bookmark $ml={12} $gap={5}><svg width="16" height="16"><rect width="16" height="16" rx="2.500" fill="#0f7fcb" /><rect x="2.500" y="2.500" width="4.600" height="11" rx="1" fill="#fff" /><rect x="9" y="2.500" width="4.600" height="6.500" rx="1" fill="#fff" /></svg><Fit w={118}>* Tableaux | Trello</Fit></Bookmark>
          <Bookmark $ml={12} $gap={5}><svg width="16" height="16" fill="none" stroke="#555" strokeWidth="1.200"><circle cx="8" cy="8" r="7" /><ellipse cx="8" cy="8" rx="3.300" ry="7" /><path d="M1.500 5.500h13M1.500 10.500h13" /></svg><Fit w={160}>http://localhost/carn…</Fit></Bookmark>
        </Bookmarks>

        <Viewport>
          <Page>
            <Brand>
              <svg width="45" height="49" viewBox="0 0 45 49">
                <path d="M0 0h45l-3 42-20 7-19-7z" fill="#ef4136" /><path d="M37 3h6l-3 38-18 6V36h14z" fill="#f15a29" />
                <path d="M9 29.500h28" stroke="#f7b0a0" />
                <Glyph x="8" y="27.500" $size={33} $fill="#fff" textLength="29" lengthAdjust="spacingAndGlyphs">3W</Glyph>
                <Glyph x="9" y="40" $size={11} $fill="#fff" textLength="27" lengthAdjust="spacingAndGlyphs">ACADEMY</Glyph>
              </svg>
              <BrandTitle><Fit w={468}>Restaurant - Made In America !</Fit></BrandTitle>
            </Brand>
            <Actions>
              <Button $w={140}><Fit w={114}>Créer un compte</Fit></Button>
              <Button $w={99}><Fit w={73}>Connexion</Fit></Button>
            </Actions>
            <Heading>
              <svg width="15" height="17" viewBox="0 0 15 17" fill="#1d5c3e"><circle cx="7.500" cy="4.300" r="4.300" /><path d="M3 7.500c3 2.500 6 2.500 9 0 2 .5 3 3 3 6.500 0 2-1 3-3 3H3c-2 0-3-1-3-3 0-3.500 1-6 3-6.500z" /></svg>
              <Fit w={267}>Création d'un compte client</Fit>
            </Heading>
            <Group $mt={25} $pt={15}>
              <Legend $gap={3}>
                <svg width="12" height="12" viewBox="0 0 12 12"><path d="M3.500 0H11.500l-2.300 8.500H2q-1 1.500.5 1.500h7L11.700 3l.3.500L10 11.500H1.500Q-.5 11 .3 8.500L2.500 1.500z" fill="#1d5c3e" /><path d="M5 3h4.500M4.500 5H9" stroke="#f4f1e9" strokeWidth=".9" /></svg>
                <Fit w={165}>Identité et coordonnées</Fit>
              </Legend>
              <TextRow label="Nom :" lw={34} />
              <TextRow label="Prénom :" lw={52} />
              <Row>
                <Label><Fit w={117}>Date de naissance :</Fit></Label>
                <Select $w={38}>1<Arrow /></Select><Slash>/</Slash>
                <Select $w={89}><Fit w={43}>Janvier</Fit><Arrow /></Select><Slash>/</Slash>
                <Select $w={53}><Fit w={27}>1940</Fit><Arrow /></Select>
              </Row>
              <Row $top><Label><Fit w={54}>Adresse :</Fit></Label><Area /></Row>
              <TextRow label="Ville :" lw={32} />
              <TextRow label="Code Postal :" lw={76} w={44} />
              <TextRow label="Téléphone :" lw={69} w={80} />
            </Group>
            <Group $mt={10} $pt={16}>
              <Legend $gap={2}>
                <svg width="9" height="11" viewBox="0 0 9 11"><path d="M0 5h9v6H0z" fill="#1d5c3e" /><path d="M2 5.500V3.500a2.500 2.500 0 0 1 5 0v2" fill="none" stroke="#1d5c3e" strokeWidth="1.600" /></svg>
                <Fit w={219}>Informations d'authentification</Fit>
              </Legend>
              <TextRow label="E-mail :" lw={45} />
              <TextRow label="Mot de passe :" lw={86} />
            </Group>
            <Submit>
              <Button $w={135}><Fit w={109}>Créer le compte</Fit></Button>
              <Button $w={55} $danger><Fit w={36}>Annuler</Fit></Button>
            </Submit>
            <Cards>
              <Card $bg="linear-gradient(#fff, #ebebeb)" $edge="#d4d4d4"><Visa><Fit w={29}>VISA</Fit></Visa></Card>
              <Card $bg="#1b2a6b" $edge="#1b4a86">
                <svg width="35" height="22" viewBox="0 0 35 22"><circle cx="12" cy="11" r="10" fill="#f00808" /><circle cx="24" cy="11" r="10" fill="#f5a81c" /><Glyph x="3" y="14" $size={8} $fill="#fff" textLength="29" lengthAdjust="spacingAndGlyphs">MasterCard</Glyph></svg>
              </Card>
              <Card $bg="linear-gradient(#fff, #fde3b8)" $edge="#fbb465"><Fit w={19}>Pay</Fit><Blue><Fit w={14}>Pal</Fit></Blue></Card>
            </Cards>
            <Made>
              <Fit w={56}>Réalisé avec</Fit>
              <HeartGap><svg width="11" height="10" viewBox="0 0 11 10"><path d="M5.500 9.500L.8 5C-1 2.500 1.500-.5 4 .5c.8.300 1.200.8 1.500 1.300C5.800 1.300 6.200.8 7 .5c2.500-1 5 2 3.200 4.500z" fill="#ef4136" /></svg></HeartGap>
              <Fit w={145}>par les élèves de la 3W Academy</Fit>
            </Made>
          </Page>
        </Viewport>
      </Browser>
    </Screen>
  );
}
